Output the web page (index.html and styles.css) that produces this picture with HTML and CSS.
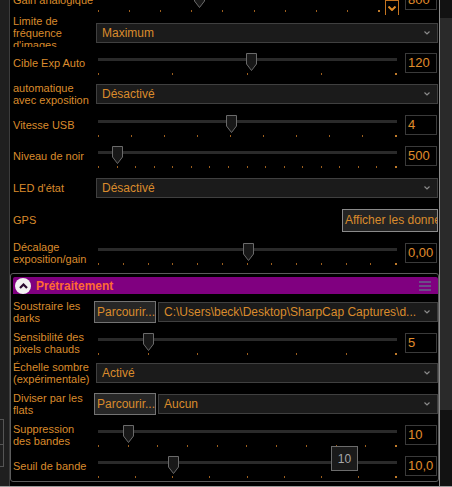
FILE: index.html
```html
<!DOCTYPE html>
<html lang="fr">
<head>
    <meta charset="UTF-8">
    <meta name="viewport" content="width=device-width, initial-scale=1.0">
    <title>Contrôles caméra</title>
    <link rel="stylesheet" href="styles.css">
</head>
<body>
    <div class="app">
        <div class="side-strip">
            <div class="side-box"></div>
            <div class="side-box short"></div>
        </div>

        <div class="settings">
            <div class="rows-top">
                <div class="row">
                    <div class="label nowrap">Gain analogique</div>
                    <div class="control">
                        <div class="slider slider-short" data-ticks="10" data-pos="36"></div>
                        <div class="spin">
                            <div class="spin-btn"></div>
                            <div class="spin-btn">
                                <svg width="8" height="5" viewBox="0 0 8 5"><path d="M0.5 0.5L4 4L7.5 0.5" /></svg>
                            </div>
                        </div>
                        <div class="num">800</div>
                    </div>
                </div>

                <div class="row row-tall">
                    <div class="label">Limite de fréquence d'images</div>
                    <div class="control">
                        <div class="select"><span>Maximum</span><svg class="chev" viewBox="0 0 6 4"><path d="M0.5 0.5L3 3L5.5 0.5" /></svg></div>
                    </div>
                </div>

                <div class="row">
                    <div class="label">Cible Exp Auto</div>
                    <div class="control">
                        <div class="slider" data-ticks="5" data-pos="51.5"></div>
                        <div class="num">120</div>
                    </div>
                </div>

                <div class="row">
                    <div class="label">automatique avec exposition</div>
                    <div class="control">
                        <div class="select"><span>Désactivé</span><svg class="chev" viewBox="0 0 6 4"><path d="M0.5 0.5L3 3L5.5 0.5" /></svg></div>
                    </div>
                </div>

                <div class="row">
                    <div class="label">Vitesse USB</div>
                    <div class="control">
                        <div class="slider" data-ticks="10" data-pos="44.5"></div>
                        <div class="num">4</div>
                    </div>
                </div>

                <div class="row row-tall">
                    <div class="label">Niveau de noir</div>
                    <div class="control">
                        <div class="slider" data-ticks="17" data-pos="6.5"></div>
                        <div class="num">500</div>
                    </div>
                </div>

                <div class="row">
                    <div class="label">LED d'état</div>
                    <div class="control">
                        <div class="select"><span>Désactivé</span><svg class="chev" viewBox="0 0 6 4"><path d="M0.5 0.5L3 3L5.5 0.5" /></svg></div>
                    </div>
                </div>

                <div class="row row-button">
                    <div class="label">GPS</div>
                    <div class="control">
                        <button type="button" class="gps-btn">Afficher les données</button>
                    </div>
                </div>

                <div class="row row-tall">
                    <div class="label">Décalage exposition/gain</div>
                    <div class="control">
                        <div class="slider" data-ticks="13" data-pos="50.2"></div>
                        <div class="num">0,00</div>
                    </div>
                </div>
            </div>

            <div class="panel">
                <div class="panel-head">
                    <div class="toggle">
                        <svg width="9" height="6" viewBox="0 0 9 6"><path d="M1 5L4.5 1.5L8 5" /></svg>
                    </div>
                    <div class="panel-title">Prétraitement</div>
                    <div class="menu"><span></span><span></span><span></span></div>
                </div>

                <div class="row">
                    <div class="label">Soustraire les darks</div>
                    <div class="control">
                        <button type="button" class="browse">Parcourir...</button>
                        <div class="select"><span>C:\Users\beck\Desktop\SharpCap Captures\d...</span><svg class="chev" viewBox="0 0 6 4"><path d="M0.5 0.5L3 3L5.5 0.5" /></svg></div>
                    </div>
                </div>

                <div class="row">
                    <div class="label">Sensibilité des pixels chauds</div>
                    <div class="control">
                        <div class="slider" data-ticks="7" data-pos="17"></div>
                        <div class="num">5</div>
                    </div>
                </div>

                <div class="row row-short">
                    <div class="label">Échelle sombre (expérimentale)</div>
                    <div class="control">
                        <div class="select"><span>Activé</span><svg class="chev" viewBox="0 0 6 4"><path d="M0.5 0.5L3 3L5.5 0.5" /></svg></div>
                    </div>
                </div>

                <div class="row">
                    <div class="label">Diviser par les flats</div>
                    <div class="control">
                        <button type="button" class="browse">Parcourir...</button>
                        <div class="select"><span>Aucun</span><svg class="chev" viewBox="0 0 6 4"><path d="M0.5 0.5L3 3L5.5 0.5" /></svg></div>
                    </div>
                </div>

                <div class="row">
                    <div class="label">Suppression des bandes</div>
                    <div class="control">
                        <div class="slider" data-ticks="11" data-pos="10.2"></div>
                        <div class="num">10</div>
                    </div>
                </div>

                <div class="row">
                    <div class="label">Seuil de bande</div>
                    <div class="control">
                        <div class="slider" data-ticks="9" data-pos="25.3"></div>
                        <div class="num">10,0</div>
                    </div>
                </div>
            </div>
        </div>

        <div class="scrollbar">
            <div class="scroll-thumb"></div>
        </div>

        <div class="tip">10</div>
    </div>

    <script>
        // build tick marks and the pointed thumb for every slider
        var thumbSvg = '<svg width="11" height="18" viewBox="0 0 11 18"><path d="M0.5 0.5H10.5V11L5.5 17.5L0.5 11Z" /></svg>';

        document.querySelectorAll('.slider').forEach(function(slider) {
            var track = document.createElement('div');
            track.className = 'track';
            slider.appendChild(track);

            var ticks = document.createElement('div');
            ticks.className = 'ticks';
            var count = parseInt(slider.dataset.ticks, 10);
            for (var i = 0; i < count; i++) {
                var tick = document.createElement('span');
                tick.className = 'tick';
                ticks.appendChild(tick);
            }
            slider.appendChild(ticks);

            var thumb = document.createElement('div');
            thumb.className = 'thumb';
            thumb.innerHTML = thumbSvg;
            // position is a share of the track, which starts 2px in
            thumb.style.left = 'calc(2px + (100% - 2px) * ' + (parseFloat(slider.dataset.pos) / 100) + ')';
            slider.appendChild(thumb);
        });
    </script>
</body>
</html>
```

FILE: styles.css
```css
* {
    box-sizing: border-box;
}
body {
    margin: 0;
    background: #000;
    font-family: "Liberation Sans", Arial, sans-serif;
    color: #da8b2c;
    overflow: hidden;
}
button {
    font-family: inherit;
    color: inherit;
    margin: 0;
    cursor: pointer;
}
.app {
    position: relative;
    display: flex;
    height: 487px;
    border-bottom: 1px solid #9a9a9a;
    overflow: hidden;
}

/* neighbouring pane on the left */
.side-strip {
    flex: none;
    width: 10px;
    padding-top: 419px;
    background: #1f1f1f;
    border-right: 1px solid #3c3c3c;
}
.side-box {
    width: 4px;
    height: 26px;
    border: 1px solid #555;
    border-left: none;
}
.side-box.short {
    height: 22px;
    border-top: none;
}

.settings {
    flex: none;
    width: 430px;
    border-right: 1px solid #8c8c8c;
    overflow: hidden;
}
.rows-top {
    margin-top: -16px;
}
.row {
    display: grid;
    grid-template-columns: 83px 1fr;
    height: 31px;
    padding: 0 1px 0 3px;
    overflow: hidden;
}
.row-tall {
    height: 32px;
}
.row-button {
    height: 34px;
}
.row-short {
    height: 30px;
}
.label {
    align-self: center;
    font-size: 11px;
    line-height: 12px;
    padding-right: 4px;
}
.label.nowrap {
    white-space: nowrap;
}
.control {
    display: flex;
    align-items: center;
    min-width: 0;
}

/* dropdowns */
.select {
    flex: 1;
    min-width: 0;
    display: flex;
    align-items: center;
    height: 20px;
    padding: 0 7px 0 5px;
    border: 1px solid #404040;
    background: #1b1b1b;
    font-size: 12px;
    white-space: nowrap;
}
.select span {
    flex: 1;
    overflow: hidden;
}
.chev {
    flex: none;
    width: 6px;
    height: 4px;
    margin-left: 6px;
}
.chev path {
    fill: none;
    stroke: #8a8a8a;
    stroke-width: 1.2;
}

/* sliders */
.slider {
    position: relative;
    flex: 1;
    align-self: stretch;
    padding: 11px 0 0 2px;
    margin-right: 8px;
}
.slider-short {
    margin-right: 5px;
}
.track {
    height: 3px;
    background: #2a2a2a;
}
.ticks {
    display: flex;
    justify-content: space-between;
    margin-top: 12px;
}
.tick {
    width: 1px;
    height: 2px;
    background: #9c5f1e;
}
.tick:last-child {
    width: 2px;
    background: #c07a2a;
}
.thumb {
    position: absolute;
    top: 6px;
    width: 11px;
    height: 18px;
    margin-left: -5.5px;
}
.thumb svg {
    display: block;
}
.thumb path {
    fill: #181818;
    stroke: #6a6a6a;
    stroke-width: 1;
}

.num {
    flex: none;
    width: 32px;
    height: 20px;
    margin-right: 1px;
    padding-left: 2px;
    border: 1px solid #3a3a3a;
    background: #000;
    font-size: 13px;
    line-height: 18px;
    color: #e08d2c;
}

.spin {
    flex: none;
    width: 14px;
    margin: 2px 6px 0 0;
    display: flex;
    flex-direction: column;
}
.spin-btn {
    height: 15px;
    border: 1px solid #c47420;
    display: flex;
    align-items: center;
    justify-content: center;
}
.spin-btn + .spin-btn {
    border-top: none;
}
.spin-btn path {
    fill: none;
    stroke: #e08a24;
    stroke-width: 2;
}

/* buttons */
.gps-btn {
    margin-left: auto;
    width: 96px;
    height: 23px;
    padding: 0 0 0 2px;
    border: 1px solid #8a8a8a;
    background: #242424;
    font-size: 12px;
    text-align: left;
    white-space: nowrap;
    overflow: hidden;
}
.browse {
    flex: none;
    width: 62px;
    height: 22px;
    margin: 0 2px 0 -2px;
    padding: 0 2px;
    border: 1px solid #737373;
    background: #262626;
    font-size: 12px;
    text-align: left;
    white-space: nowrap;
    overflow: hidden;
}

/* collapsible group */
.panel {
    margin-top: 4px;
    padding: 3px 0 0 2px;
    border: 1px solid #5c5c5c;
    border-radius: 3px;
}
.panel .row {
    padding: 0;
}
.panel-head {
    display: flex;
    align-items: center;
    height: 17px;
    margin-bottom: 2px;
    padding: 0 7px 0 2px;
    background: #800080;
    border-radius: 2px 2px 0 0;
}
.toggle {
    width: 16px;
    height: 16px;
    border-radius: 50%;
    background: #f2f2f2;
    display: flex;
    align-items: center;
    justify-content: center;
}
.toggle path {
    fill: none;
    stroke: #2a0a30;
    stroke-width: 2.2;
}
.panel-title {
    margin-left: 5px;
    font-size: 12px;
    font-weight: bold;
    color: #ff6a33;
}
.menu {
    margin-left: auto;
    width: 12px;
    display: flex;
    flex-direction: column;
    gap: 2px;
}
.menu span {
    height: 2px;
    background: #6b4d87;
}

.scrollbar {
    flex: none;
    width: 12px;
    background: #121212;
}
.scroll-thumb {
    margin-top: 18px;
    height: 392px;
    background: #2a2a2a;
}

.tip {
    position: absolute;
    left: 331px;
    top: 446px;
    width: 27px;
    height: 25px;
    border: 1px solid #6c6c6c;
    background: #1a1a1a;
    color: #a8a8a8;
    font-size: 12px;
    display: flex;
    align-items: center;
    justify-content: center;
}
```
